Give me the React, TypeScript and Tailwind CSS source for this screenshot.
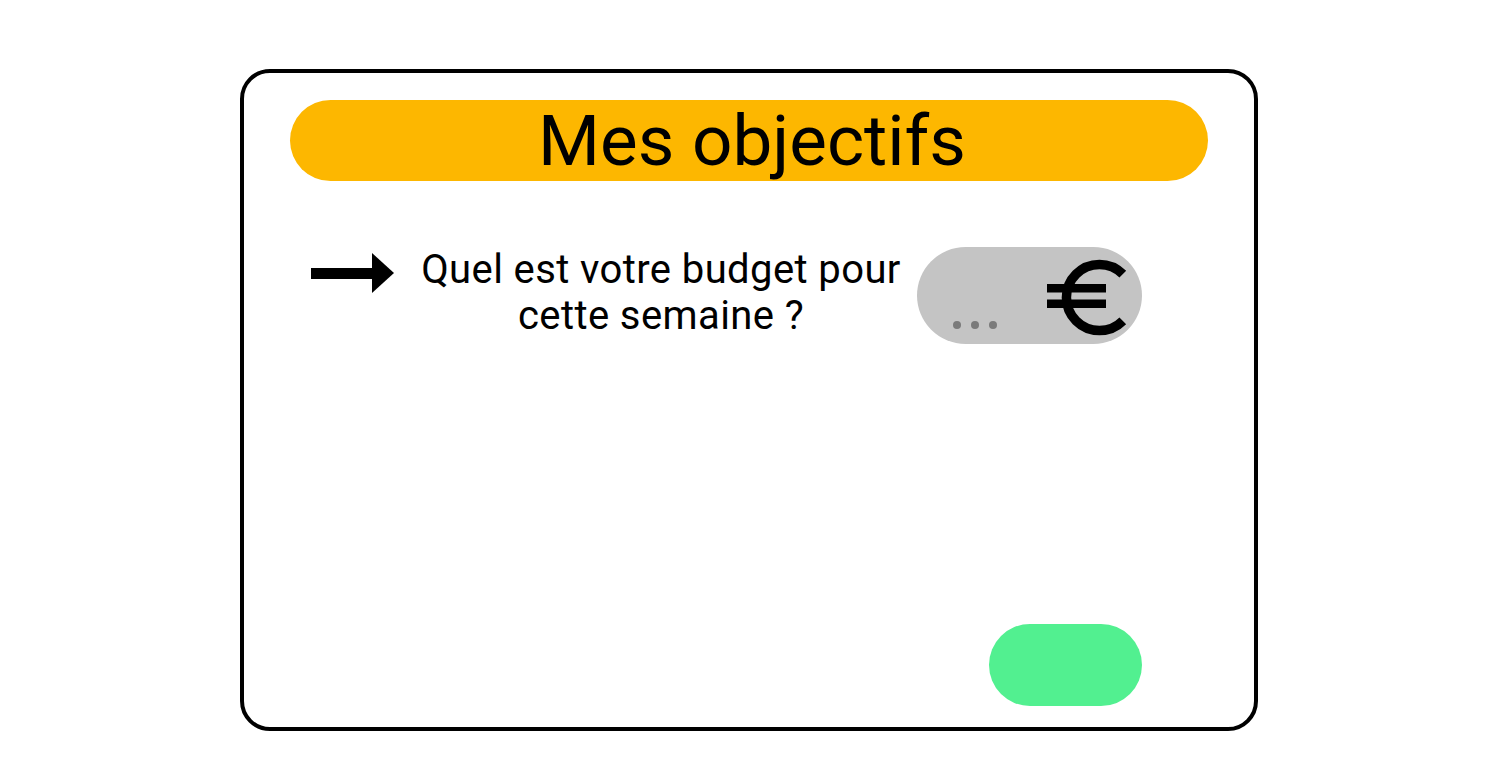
export default function App() {
  return (
    <div className="flex min-h-[766px] w-full justify-center bg-white pt-[69px] font-['Roboto',sans-serif] text-black">
      <div className="flex h-[662px] w-[1018px] flex-col rounded-[30px] border-[4px] border-black px-[46px] pt-[27px] pb-[21px]">
        <div className="flex h-[81px] w-full items-center justify-center rounded-full bg-[#fdb700] pl-[6px]">
          <h1 className="text-[71px] leading-none">Mes objectifs</h1>
        </div>

        <div className="mt-[66px] flex items-start pl-[21px]">
          <svg width="83" height="40" viewBox="0 0 83 40" className="mt-[6px] shrink-0">
            <rect x="0" y="15" width="64" height="11" fill="black" />
            <polygon points="61,0 83,20 61,40" fill="black" />
          </svg>
          <p className="ml-[22px] w-[490px] text-center text-[40px] leading-[46px] tracking-[0.4px]">
            Quel est votre budget pour cette semaine ?
          </p>
          <div className="ml-[11px] flex h-[97px] w-[225px] shrink-0 rounded-full bg-[#c4c4c4] pl-[36px]">
            <div className="mb-[15px] flex gap-[10px] self-end">
              <span className="h-[8px] w-[8px] rounded-full bg-[#7a7a7a]" />
              <span className="h-[8px] w-[8px] rounded-full bg-[#7a7a7a]" />
              <span className="h-[8px] w-[8px] rounded-full bg-[#7a7a7a]" />
            </div>
            <svg width="90" height="80" viewBox="0 0 90 80" className="mt-[11px] mr-[8px] ml-auto">
              <path d="M78.8 16.2 A33 33 0 1 0 78.8 62.8" fill="none" stroke="black" strokeWidth="9.5" />
              <rect x="3" y="26" width="59" height="8.5" fill="black" />
              <rect x="3" y="41.5" width="59" height="8.5" fill="black" />
            </svg>
          </div>
        </div>

        <div className="flex-1" />

        <div className="flex justify-end pr-[66px]">
          <button type="button" className="h-[82px] w-[153px] rounded-full bg-[#52f090]" />
        </div>
      </div>
    </div>
  );
}
